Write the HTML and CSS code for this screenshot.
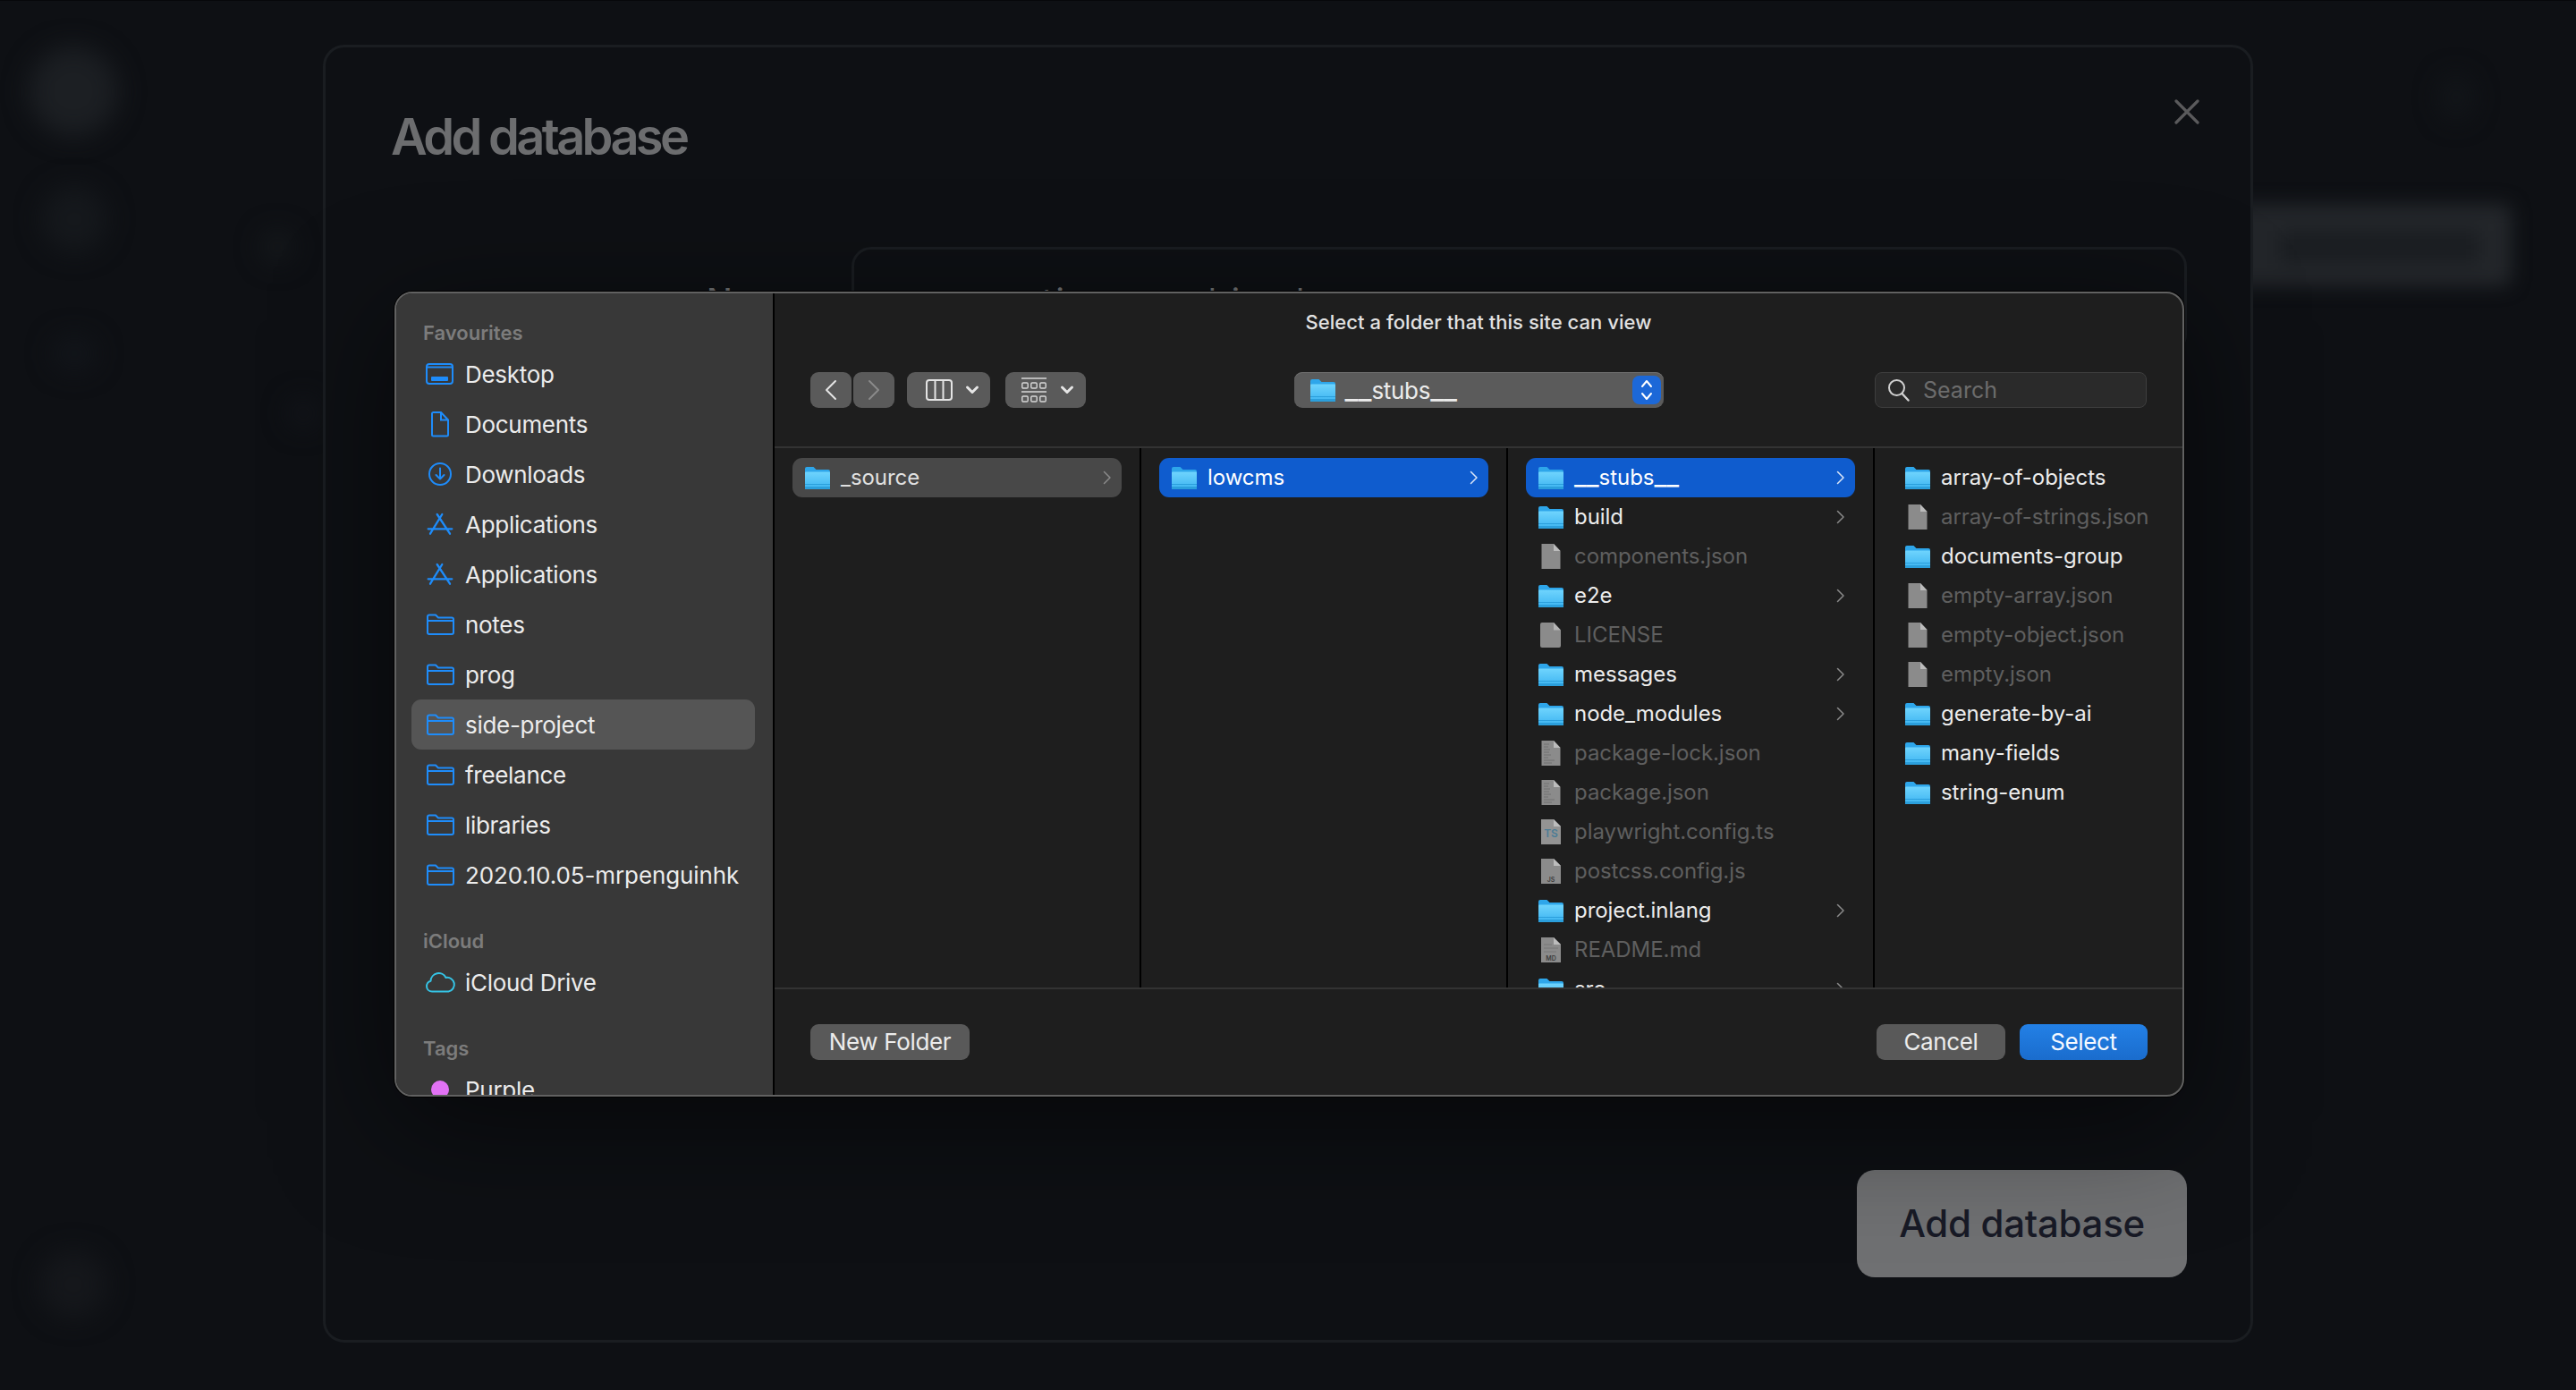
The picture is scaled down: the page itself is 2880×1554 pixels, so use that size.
FILE: index.html
```html
<!DOCTYPE html>
<html lang="en">
<head>
<meta charset="utf-8">
<title>Add database</title>
<link rel="stylesheet" href="styles.css">
</head>
<body>
<svg class="sprites" width="0" height="0" aria-hidden="true">
  <defs>
    <linearGradient id="fg" x1="0" y1="0" x2="0" y2="1">
      <stop offset="0" stop-color="#6fd4fd"/>
      <stop offset="1" stop-color="#3db4f1"/>
    </linearGradient>
    <symbol id="folder" viewBox="0 0 28 26">
      <path d="M0 3a2 2 0 0 1 2-2h7.5l3 3H26a2 2 0 0 1 2 2v6H0z" fill="#2ea6ea"/>
      <path d="M0 7.5a1 1 0 0 1 1-1h26a1 1 0 0 1 1 1V24a2 2 0 0 1-2 2H2a2 2 0 0 1-2-2z" fill="url(#fg)"/>
      <path d="M0 20h28v1H0zM0 23h28v3H0z" fill="#2b9fdc"/>
    </symbol>
    <symbol id="doc" viewBox="0 0 28 30">
      <path d="M3.5 1h13.5l7.500 8v20h-21z" fill="#8b8b8b"/>
      <path d="M17 1v8h7.500z" fill="#bcbcbc"/>
    </symbol>
    <symbol id="doc-round" viewBox="0 0 28 30">
      <path d="M4 1h13l8 8.500v17.500a2 2 0 0 1-2 2H4a2 2 0 0 1-2-2V3a2 2 0 0 1 2-2z" fill="#8b8b8b"/>
      <path d="M17 1v8.500h8z" fill="#b4b4b4"/>
    </symbol>
    <symbol id="doc-lines" viewBox="0 0 28 30">
      <path d="M3.500 1h13.500l7.500 8v20h-21z" fill="#8b8b8b"/>
      <path d="M17 1v8h7.500z" fill="#bcbcbc"/>
      <path d="M6 5h6M6 8h5M6 11h7M6 14h6M6 17h8M6 20h5M6 23h12M6 26h9" stroke="#707070" stroke-width="1"/>
    </symbol>
    <symbol id="doc-ts" viewBox="0 0 28 30">
      <path d="M3 1h14l8 8v20H3z" fill="#939393"/>
      <path d="M17 1v8h8z" fill="#bcbcbc"/>
      <text x="14" y="21" text-anchor="middle" class="doc-badge doc-badge-ts">TS</text>
    </symbol>
    <symbol id="doc-js" viewBox="0 0 28 30">
      <path d="M3 1h14l8 8v20H3z" fill="#8b8b8b"/>
      <path d="M17 1v8h8z" fill="#bcbcbc"/>
      <text x="14" y="27" text-anchor="middle" class="doc-badge">JS</text>
    </symbol>
    <symbol id="doc-md" viewBox="0 0 28 30">
      <path d="M3 1h14l8 8v20H3z" fill="#8b8b8b"/>
      <path d="M17 1v8h8z" fill="#bcbcbc"/>
      <path d="M6 9h9M6 13h16M6 17h14" stroke="#777" stroke-width="1"/>
      <text x="14" y="27" text-anchor="middle" class="doc-badge">MD</text>
    </symbol>
    <symbol id="chev" viewBox="0 0 10 16">
      <path d="M1.500 1.500 8 8l-6.500 6.500" fill="none" stroke="currentColor" stroke-width="1.500" stroke-linecap="round" stroke-linejoin="round"/>
    </symbol>
    <symbol id="drop" viewBox="0 0 16 12">
      <path d="M2.500 3 8 8.500 13.500 3" fill="none" stroke="#e6e6e6" stroke-width="3" stroke-linecap="round" stroke-linejoin="round"/>
    </symbol>
    <symbol id="side-folder" viewBox="0 0 40 30">
      <path d="M6 10V6.500a2 2 0 0 1 2-2h7l3 3h15a2 2 0 0 1 2 2V24a2 2 0 0 1-2 2H8a2 2 0 0 1-2-2zM6 11h29" fill="none" stroke="#1e8cfa" stroke-width="2"/>
    </symbol>
    <symbol id="side-apps" viewBox="0 0 40 30">
      <path d="M22.300 4 9 25.700M16.700 4 31 25.700M6.700 20.300h26.600" fill="none" stroke="#1e8cfa" stroke-width="2.300" stroke-linecap="round"/>
    </symbol>
  </defs>
</svg>

<div class="page">
  <div class="ghosts" aria-hidden="true">
    <span class="ghost ghost-avatar"></span>
    <span class="ghost ghost-nav"></span>
    <span class="ghost ghost-a"></span>
    <span class="ghost ghost-b"></span>
    <span class="ghost ghost-c"></span>
    <span class="ghost ghost-foot"></span>
    <span class="ghost ghost-user"></span>
    <span class="ghost ghost-btn"><i></i></span>
  </div>

  <section class="modal">
    <h1 class="modal-title">Add database</h1>
    <svg class="modal-close" width="28" height="28" viewBox="0 0 28 28"><path d="M2 2l24 24M26 2 2 26" stroke="#5a5a5c" stroke-width="3.200" stroke-linecap="round"/></svg>

    <div class="form-row">
      <label class="form-label">Name</label>
      <div class="form-input">
        <span class="tok tok-1">ti</span><span class="tok tok-2">l</span><span class="tok tok-3">i</span><span class="tok tok-4">l</span>
      </div>
    </div>

    <button class="primary">Add database</button>

    <div class="dialog">
      <aside class="sidebar">
        <div class="side-head side-head-first">Favourites</div>
        <div class="side-row">
          <svg class="side-icon" viewBox="0 0 40 30"><rect x="5" y="4" width="29" height="22" rx="3" fill="none" stroke="#1e8cfa" stroke-width="2"/><path d="M5 7.500h29" stroke="#1e8cfa" stroke-width="2"/><rect x="10" y="18" width="19" height="5" rx="1" fill="#1e8cfa"/></svg>
          <span>Desktop</span>
        </div>
        <div class="side-row">
          <svg class="side-icon" viewBox="0 0 40 30"><path d="M11 3a1.500 1.500 0 0 1 1.500-1H21l8 8.500V27a1.500 1.500 0 0 1-1.500 1.500h-15A1.500 1.500 0 0 1 11 27zM21 2v8.500h8" fill="none" stroke="#1e8cfa" stroke-width="2"/></svg>
          <span>Documents</span>
        </div>
        <div class="side-row">
          <svg class="side-icon" viewBox="0 0 40 30"><circle cx="20" cy="15" r="12" fill="none" stroke="#1e8cfa" stroke-width="2"/><path d="M20 8.500v12M15.500 16l4.500 4.500 4.500-4.500" fill="none" stroke="#1e8cfa" stroke-width="2" stroke-linecap="round" stroke-linejoin="round"/></svg>
          <span>Downloads</span>
        </div>
        <div class="side-row"><svg class="side-icon"><use href="#side-apps"/></svg><span>Applications</span></div>
        <div class="side-row"><svg class="side-icon"><use href="#side-apps"/></svg><span>Applications</span></div>
        <div class="side-row"><svg class="side-icon"><use href="#side-folder"/></svg><span>notes</span></div>
        <div class="side-row"><svg class="side-icon"><use href="#side-folder"/></svg><span>prog</span></div>
        <div class="side-row side-row-active"><svg class="side-icon"><use href="#side-folder"/></svg><span>side-project</span></div>
        <div class="side-row"><svg class="side-icon"><use href="#side-folder"/></svg><span>freelance</span></div>
        <div class="side-row"><svg class="side-icon"><use href="#side-folder"/></svg><span>libraries</span></div>
        <div class="side-row"><svg class="side-icon"><use href="#side-folder"/></svg><span class="side-long">2020.10.05-mrpenguinhk</span></div>
        <div class="side-head">iCloud</div>
        <div class="side-row">
          <svg class="side-icon" viewBox="0 0 40 30"><path d="M11 25.500a6 6 0 0 1-1.500-11.800 9 9 0 0 1 17-3.700 7.800 7.800 0 0 1 3 15.500z" fill="none" stroke="#35c4e6" stroke-width="2" stroke-linejoin="round"/></svg>
          <span>iCloud Drive</span>
        </div>
        <div class="side-head">Tags</div>
        <div class="side-row"><span class="tag-slot"><span class="tag-dot"></span></span><span>Purple</span></div>
      </aside>

      <div class="main">
        <header class="main-head">
          <div class="prompt">Select a folder that this site can view</div>
          <div class="toolbar">
            <div class="tool-left">
              <button class="tool tool-nav"><svg width="14" height="24" viewBox="0 0 14 24"><path d="M12 2 2 12l10 10" fill="none" stroke="#e4e4e4" stroke-width="2" stroke-linecap="round" stroke-linejoin="round"/></svg></button>
              <button class="tool tool-nav"><svg width="14" height="24" viewBox="0 0 14 24"><path d="m2 2 10 10L2 22" fill="none" stroke="#8a8a8a" stroke-width="2" stroke-linecap="round" stroke-linejoin="round"/></svg></button>
              <button class="tool tool-view">
                <svg width="30" height="24" viewBox="0 0 30 24"><rect x="1" y="1" width="28" height="22" rx="3" fill="none" stroke="#e4e4e4" stroke-width="2"/><path d="M10.500 1v22M19.500 1v22" stroke="#e4e4e4" stroke-width="2"/></svg>
                <svg width="16" height="12"><use href="#drop"/></svg>
              </button>
              <button class="tool tool-group">
                <svg width="28" height="28" viewBox="0 0 28 28"><path d="M0 1h28M0 16h28" stroke="#d8d8d8" stroke-width="1.600"/><g fill="none" stroke="#d8d8d8" stroke-width="1.400"><rect x=".8" y="6" width="6.400" height="6" rx="1.200"/><rect x="10.800" y="6" width="6.400" height="6" rx="1.200"/><rect x="20.800" y="6" width="6.400" height="6" rx="1.200"/><rect x=".8" y="21" width="6.400" height="6" rx="1.200"/><rect x="10.800" y="21" width="6.400" height="6" rx="1.200"/><rect x="20.800" y="21" width="6.400" height="6" rx="1.200"/></g></svg>
                <svg width="16" height="12"><use href="#drop"/></svg>
              </button>
            </div>
            <div class="path-popup">
              <svg class="ficon"><use href="#folder"/></svg>
              <span class="path-label"><span class="us">__</span>stubs<span class="us">__</span></span>
              <span class="stepper"><svg width="14" height="26" viewBox="0 0 14 26"><path d="M2 9l5-6 5 6M2 17l5 6 5-6" fill="none" stroke="#fff" stroke-width="2" stroke-linecap="round" stroke-linejoin="round"/></svg></span>
            </div>
            <div class="tool-right">
              <div class="search">
                <svg width="26" height="26" viewBox="0 0 26 26"><circle cx="10.500" cy="10.500" r="8.500" fill="none" stroke="#d0d0d0" stroke-width="2"/><path d="m16.500 17 7 7.500" stroke="#d0d0d0" stroke-width="2.400" stroke-linecap="round"/></svg>
                <span>Search</span>
              </div>
            </div>
          </div>
        </header>

        <div class="browser">
          <div class="col">
            <div class="row row-muted"><svg class="ficon"><use href="#folder"/></svg><span class="row-name">_source</span><svg class="chev"><use href="#chev"/></svg></div>
          </div>
          <div class="col">
            <div class="row row-sel"><svg class="ficon"><use href="#folder"/></svg><span class="row-name">lowcms</span><svg class="chev"><use href="#chev"/></svg></div>
          </div>
          <div class="col">
            <div class="row row-sel"><svg class="ficon"><use href="#folder"/></svg><span class="row-name"><span class="us">__</span>stubs<span class="us">__</span></span><svg class="chev"><use href="#chev"/></svg></div>
            <div class="row"><svg class="ficon"><use href="#folder"/></svg><span class="row-name">build</span><svg class="chev"><use href="#chev"/></svg></div>
            <div class="row row-file"><svg class="ficon ficon-doc"><use href="#doc"/></svg><span class="row-name">components.json</span></div>
            <div class="row"><svg class="ficon"><use href="#folder"/></svg><span class="row-name">e2e</span><svg class="chev"><use href="#chev"/></svg></div>
            <div class="row row-file"><svg class="ficon ficon-doc"><use href="#doc-round"/></svg><span class="row-name">LICENSE</span></div>
            <div class="row"><svg class="ficon"><use href="#folder"/></svg><span class="row-name">messages</span><svg class="chev"><use href="#chev"/></svg></div>
            <div class="row"><svg class="ficon"><use href="#folder"/></svg><span class="row-name">node_modules</span><svg class="chev"><use href="#chev"/></svg></div>
            <div class="row row-file"><svg class="ficon ficon-doc"><use href="#doc-lines"/></svg><span class="row-name">package-lock.json</span></div>
            <div class="row row-file"><svg class="ficon ficon-doc"><use href="#doc-lines"/></svg><span class="row-name">package.json</span></div>
            <div class="row row-file"><svg class="ficon ficon-doc"><use href="#doc-ts"/></svg><span class="row-name">playwright.config.ts</span></div>
            <div class="row row-file"><svg class="ficon ficon-doc"><use href="#doc-js"/></svg><span class="row-name">postcss.config.js</span></div>
            <div class="row"><svg class="ficon"><use href="#folder"/></svg><span class="row-name">project.inlang</span><svg class="chev"><use href="#chev"/></svg></div>
            <div class="row row-file"><svg class="ficon ficon-doc"><use href="#doc-md"/></svg><span class="row-name">README.md</span></div>
            <div class="row"><svg class="ficon"><use href="#folder"/></svg><span class="row-name">src</span><svg class="chev"><use href="#chev"/></svg></div>
          </div>
          <div class="col col-last">
            <div class="row"><svg class="ficon"><use href="#folder"/></svg><span class="row-name">array-of-objects</span></div>
            <div class="row row-file"><svg class="ficon ficon-doc"><use href="#doc"/></svg><span class="row-name">array-of-strings.json</span></div>
            <div class="row"><svg class="ficon"><use href="#folder"/></svg><span class="row-name">documents-group</span></div>
            <div class="row row-file"><svg class="ficon ficon-doc"><use href="#doc"/></svg><span class="row-name">empty-array.json</span></div>
            <div class="row row-file"><svg class="ficon ficon-doc"><use href="#doc"/></svg><span class="row-name">empty-object.json</span></div>
            <div class="row row-file"><svg class="ficon ficon-doc"><use href="#doc"/></svg><span class="row-name">empty.json</span></div>
            <div class="row"><svg class="ficon"><use href="#folder"/></svg><span class="row-name">generate-by-ai</span></div>
            <div class="row"><svg class="ficon"><use href="#folder"/></svg><span class="row-name">many-fields</span></div>
            <div class="row"><svg class="ficon"><use href="#folder"/></svg><span class="row-name">string-enum</span></div>
          </div>
        </div>

        <footer class="main-foot">
          <button class="mac-btn mac-new">New Folder</button>
          <div class="foot-actions">
            <button class="mac-btn mac-cancel">Cancel</button>
            <button class="mac-btn mac-select">Select</button>
          </div>
        </footer>
      </div>
    </div>
  </section>
</div>
</body>
</html>
```

FILE: styles.css
```css
* { box-sizing: border-box; }
html, body { margin: 0; height: 100%; }
body {
  width: 2880px;
  height: 1554px;
  overflow: hidden;
  background: #0e1014;
  font-family: Inter, "Liberation Sans", sans-serif;
}
.sprites { position: absolute; }
.doc-badge { font: 600 7px Inter, sans-serif; fill: #3c3c3c; }
.doc-badge-ts { font-size: 12px; fill: #4a7c96; }
.us { font-size: 1.26em; line-height: 0; letter-spacing: 0; }

.page {
  position: relative;
  width: 2880px;
  height: 1554px;
  display: flex;
  justify-content: center;
  padding-top: 50px;
  box-shadow: inset 0 1px 0 #07080a;
  overflow: hidden;
}

/* blurred app behind the modal */
.ghosts { position: absolute; inset: 0; }
.ghost { position: absolute; display: block; background: #1c1f23; filter: blur(14px); }
.ghost-avatar { left: 32px; top: 52px; width: 100px; height: 100px; border-radius: 50%; }
.ghost-nav { left: 46px; top: 208px; width: 74px; height: 74px; border-radius: 50%; background: #15181c; }
.ghost-a { left: 292px; top: 258px; width: 36px; height: 36px; border-radius: 50%; background: #15181b; }
.ghost-b { left: 322px; top: 445px; width: 34px; height: 34px; border-radius: 50%; background: #13151a; }
.ghost-c { left: 58px; top: 375px; width: 50px; height: 40px; border-radius: 50%; background: #12151a; }
.ghost-foot { left: 44px; top: 1398px; width: 76px; height: 76px; border-radius: 50%; background: #15171b; }
.ghost-user { left: 2728px; top: 84px; width: 36px; height: 50px; border-radius: 50%; background: #13161a; }
.ghost-btn { left: 2490px; top: 228px; width: 318px; height: 92px; border-radius: 10px; background: #23262a; filter: blur(10px); }
.ghost-btn i { position: absolute; left: 60px; right: 36px; top: 30px; bottom: 26px; background: #1a1d21; }

/* modal */
.modal {
  position: relative;
  width: 2158px;
  height: 1451px;
  flex: none;
  display: flex;
  flex-direction: column;
  padding: 0 71px 70px 73px;
  background: #0e1014;
  border: 3px solid #1a1d21;
  border-radius: 24px;
}
.modal-title {
  margin: 66px 0 0;
  font-size: 56px;
  line-height: 68px;
  font-weight: 600;
  letter-spacing: -3.7px;
  color: #6c6d6f;
}
.modal-close { position: absolute; right: 57px; top: 58px; }

.form-row { display: flex; margin-top: 89px; }
.form-label {
  width: 515px;
  padding: 37px 0 0 353px;
  font-size: 38px;
  line-height: 46px;
  font-weight: 500;
  color: #707173;
}
.form-input {
  flex: 1;
  height: 120px;
  display: flex;
  align-items: flex-start;
  padding-top: 34px;
  border: 3px solid #1a1d21;
  border-radius: 22px;
  font-size: 38px;
  line-height: 46px;
  color: #707173;
}
.tok { display: block; letter-spacing: 3px; }
.tok-1 { margin-left: 210px; }
.tok-2 { margin-left: 158px; }
.tok-3 { margin-left: 14px; }
.tok-4 { margin-left: 60px; }

.primary {
  margin: auto 0 0 auto;
  width: 369px;
  height: 120px;
  border: 0;
  border-radius: 20px;
  background: #6f7072;
  color: #181a26;
  font: 500 42px/1 Inter, "Liberation Sans", sans-serif;
  letter-spacing: -0.3px;
}

/* macOS open panel */
.dialog {
  position: absolute;
  left: 77px;
  top: 273px;
  width: 2001px;
  height: 900px;
  display: flex;
  overflow: hidden;
  border: 2px solid #616161;
  border-radius: 20px;
  background: #1e1e1e;
  box-shadow: 0 0 0 1px #000, 0 30px 130px rgba(0, 0, 0, .55);
}
.sidebar {
  width: 423px;
  flex: none;
  overflow: hidden;
  padding-top: 30px;
  background: #383838;
  border-right: 2px solid #000;
}
.side-head {
  height: 28px;
  margin: 32px 0 4px 30px;
  font-size: 22px;
  line-height: 28px;
  font-weight: 600;
  color: #7c7c7c;
}
.side-head-first { margin-top: 0; }
.side-row {
  height: 56px;
  flex: none;
  display: flex;
  align-items: center;
  gap: 8px;
  margin: 0 20px 0 17px;
  padding-left: 12px;
  border-radius: 11px;
  font-size: 26px;
  letter-spacing: -0.3px;
  color: #ececec;
  white-space: nowrap;
}
.side-long { letter-spacing: -0.1px; }
.side-row-active { background: #555555; }
.side-icon { width: 40px; height: 30px; flex: none; }
.tag-slot { width: 40px; display: flex; justify-content: center; flex: none; }
.tag-dot { width: 20px; height: 20px; border-radius: 50%; background: #e272f5; }

.main { flex: 1; min-width: 0; display: flex; flex-direction: column; }
.main-head {
  height: 173px;
  flex: none;
  border-bottom: 2px solid #333333;
}
.prompt {
  padding-top: 18px;
  text-align: center;
  font-size: 22px;
  line-height: 28px;
  font-weight: 500;
  color: #e2e2e2;
  letter-spacing: .05px;
}
.toolbar {
  display: grid;
  grid-template-columns: 1fr 413px 1fr;
  align-items: center;
  height: 40px;
  margin-top: 42px;
  padding: 0 40px;
}
.tool-left { display: flex; }
.tool {
  height: 40px;
  border: 0;
  padding: 0;
  border-radius: 9px;
  background: #5a5a5a;
  display: flex;
  align-items: center;
}
.tool-nav { width: 46px; justify-content: center; margin-right: 2px; }
.tool-nav + .tool-nav { margin-right: 14px; }
.tool-view { width: 93px; padding-left: 21px; gap: 14px; margin-right: 17px; }
.tool-group { width: 90px; padding-left: 18px; gap: 15px; }

.path-popup {
  height: 40px;
  display: flex;
  align-items: center;
  padding: 0 3px 0 18px;
  border-radius: 9px;
  background: #5b5b5b;
  box-shadow: inset 0 1px 0 #6e6e6e;
}
.path-label { margin-left: 11px; font-size: 26px; letter-spacing: -.3px; color: #ececec; }
.stepper {
  margin-left: auto;
  width: 32px;
  height: 32px;
  border-radius: 8px;
  background: #1c68d8;
  display: flex;
  align-items: center;
  justify-content: center;
}
.tool-right { display: flex; justify-content: flex-end; }
.search {
  width: 304px;
  height: 40px;
  display: flex;
  align-items: center;
  gap: 14px;
  padding-left: 13px;
  border: 1px solid #3e3e3e;
  border-radius: 8px;
  background: #2a2a2a;
  font-size: 25px;
  color: #6c6c6c;
}

.browser { flex: 1; min-height: 0; display: flex; overflow: hidden; }
.col {
  width: 410px;
  flex: none;
  padding-top: 11px;
  border-right: 2px solid #000;
}
.col-last { flex: 1; width: auto; border-right: 0; }
.row {
  height: 44px;
  display: flex;
  align-items: center;
  margin: 0 20px;
  padding: 0 11px 0 14px;
  border-radius: 11px;
  font-size: 24px;
  letter-spacing: -.05px;
  color: #ececec;
  white-space: nowrap;
}
.row-name { margin: -2px 0 0 12px; flex: 1; }
.row-file { color: #5f5f5f; }
.row-muted { background: #484848; color: #e0e0e0; }
.row-sel { background: #0f5cce; color: #fff; }
.ficon { width: 28px; height: 26px; flex: none; margin-top: -1px; }
.ficon-doc { height: 30px; }
.chev { width: 10px; height: 16px; flex: none; color: #8a8a8a; }
.row-sel .chev { color: #dbe6f8; }

.main-foot {
  height: 120px;
  flex: none;
  display: flex;
  align-items: center;
  justify-content: space-between;
  padding: 0 39px 0 40px;
  border-top: 2px solid #333333;
}
.foot-actions { display: flex; gap: 16px; }
.mac-btn {
  height: 40px;
  border: 0;
  border-radius: 9px;
  background: #595959;
  color: #ececec;
  font: 400 26px/1 Inter, "Liberation Sans", sans-serif;
  letter-spacing: -.35px;
  padding: 0;
}
.mac-new { width: 178px; }
.mac-cancel { width: 144px; }
.mac-select { width: 143px; background: linear-gradient(#2380e6, #1a6ccd); color: #f4f8ff; }
```
